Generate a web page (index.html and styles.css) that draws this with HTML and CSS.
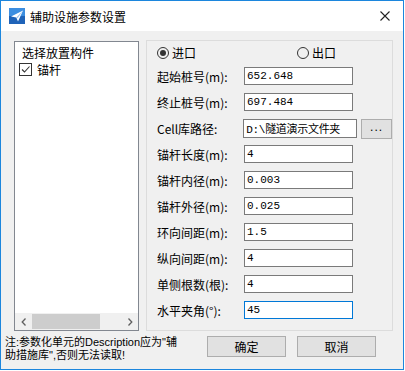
FILE: index.html
```html
<!DOCTYPE html>
<html lang="zh-CN">
<head>
    <meta charset="UTF-8">
    <title>辅助设施参数设置</title>
    <link rel="stylesheet" href="styles.css">
</head>
<body>
    <div class="dialog">
        <div class="titlebar">
            <svg class="app-icon" width="16" height="16" viewBox="0 0 16 16">
                <rect width="16" height="16" fill="#1f63b8"/>
                <rect width="16" height="8" fill="#3c8ee0"/>
                <path d="M2 8.5 L14 2.5 L9 13.5 L7.3 9.6 Z" fill="#ffffff"/>
                <path d="M7.3 9.6 L14 2.5 L8.6 10.2 Z" fill="#9cc3ee"/>
            </svg>
            <span class="title">辅助设施参数设置</span>
            <svg class="close" width="10" height="10" viewBox="0 0 10 10">
                <path d="M0.5 0.5 L9.5 9.5 M9.5 0.5 L0.5 9.5" stroke="#222" stroke-width="1.1"/>
            </svg>
        </div>

        <div class="client">
            <div class="main">
                <div class="list-box">
                    <div class="list-items">
                        <div class="list-head">选择放置构件</div>
                        <label class="list-item">
                            <span class="check">
                                <svg width="11" height="11" viewBox="0 0 11 11">
                                    <path d="M2 5.5 L4.5 8 L9.5 2.5" fill="none" stroke="#333" stroke-width="1.1"/>
                                </svg>
                            </span>
                            锚杆
                        </label>
                    </div>
                    <div class="hscroll">
                        <span class="arrow">
                            <svg width="6" height="8" viewBox="0 0 6 8"><path d="M4.5 0.5 L1.2 4 L4.5 7.5" fill="none" stroke="#606060" stroke-width="1.3"/></svg>
                        </span>
                        <div class="track"><div class="thumb"></div></div>
                        <span class="arrow">
                            <svg width="6" height="8" viewBox="0 0 6 8"><path d="M1.5 0.5 L4.8 4 L1.5 7.5" fill="none" stroke="#606060" stroke-width="1.3"/></svg>
                        </span>
                    </div>
                </div>

                <div class="group">
                    <div class="radio-row">
                        <label class="radio on"><span class="dot"></span>进口</label>
                        <label class="radio"><span class="dot"></span>出口</label>
                    </div>
                    <div class="fields">
                        <div class="field"><span class="label">起始桩号(m):</span><input class="box" value="652.648"></div>
                        <div class="field"><span class="label">终止桩号(m):</span><input class="box" value="697.484"></div>
                        <div class="field"><span class="label">Cell库路径:</span><input class="box wide" value="D:\隧道演示文件夹"><button class="browse">...</button></div>
                        <div class="field"><span class="label">锚杆长度(m):</span><input class="box" value="4"></div>
                        <div class="field"><span class="label">锚杆内径(m):</span><input class="box" value="0.003"></div>
                        <div class="field"><span class="label">锚杆外径(m):</span><input class="box" value="0.025"></div>
                        <div class="field"><span class="label">环向间距(m):</span><input class="box" value="1.5"></div>
                        <div class="field"><span class="label">纵向间距(m):</span><input class="box" value="4"></div>
                        <div class="field"><span class="label">单侧根数(根):</span><input class="box" value="4"></div>
                        <div class="field"><span class="label">水平夹角(°):</span><input class="box focus" value="45"></div>
                    </div>
                </div>
            </div>

            <div class="footer">
                <div class="note">
                    <div>注:参数化单元的Description应为"辅</div>
                    <div>助措施库",否则无法读取!</div>
                </div>
                <button class="btn">确定</button>
                <button class="btn">取消</button>
            </div>
        </div>
    </div>
</body>
</html>
```

FILE: styles.css
```css
body {
    margin: 0;
    padding: 0;
    background: #ffffff;
    font-family: "Noto Sans CJK SC", "Liberation Sans", sans-serif;
    font-size: 12px;
    color: #000;
}

.dialog {
    width: 402px;
    height: 368px;
    border: 1px solid #1c86dd;
    display: flex;
    flex-direction: column;
    background: #f0f0f0;
}

.titlebar {
    height: 30px;
    background: #ffffff;
    display: flex;
    align-items: center;
    padding: 0 13px 0 8px;
}

.app-icon {
    margin-right: 5px;
}

.title {
    flex: 1;
    font-size: 12px;
}

.client {
    flex: 1;
    display: flex;
    flex-direction: column;
}

.main {
    display: flex;
    gap: 7px;
    padding: 9px 0 0 13px;
}

.list-box {
    width: 123px;
    height: 288px;
    margin-top: 1px;
    border: 1px solid #828790;
    background: #ffffff;
    display: flex;
    flex-direction: column;
}

.list-items {
    flex: 1;
    padding: 2px 0 0 4px;
}

.list-head {
    padding-left: 3px;
    line-height: 17px;
}

.list-item {
    display: flex;
    align-items: center;
    gap: 5px;
    line-height: 17px;
}

.check {
    width: 11px;
    height: 11px;
    border: 1px solid #333;
    display: flex;
}

.hscroll {
    height: 17px;
    background: #f0f0f0;
    display: flex;
    align-items: center;
}

.arrow {
    width: 17px;
    display: flex;
    justify-content: center;
}

.track {
    flex: 1;
    height: 15px;
}

.thumb {
    width: 68px;
    height: 15px;
    background: #cdcdcd;
}

.group {
    width: 247px;
    height: 291px;
    box-sizing: border-box;
    border: 1px solid #dcdcdc;
    padding-left: 10px;
}

.radio-row {
    display: flex;
    height: 19px;
    margin-top: 2px;
    align-items: center;
}

.radio {
    display: flex;
    align-items: center;
    gap: 3px;
}

.radio.on {
    width: 140px;
    flex-shrink: 0;
}

.dot {
    width: 10px;
    height: 10px;
    border: 1px solid #333;
    border-radius: 50%;
    display: flex;
    align-items: center;
    justify-content: center;
}

.radio.on .dot::after {
    content: "";
    width: 6px;
    height: 6px;
    border-radius: 50%;
    background: #333;
}

.fields {
    display: flex;
    flex-direction: column;
    gap: 8px;
    margin-top: 5px;
}

.field {
    display: flex;
    align-items: center;
    height: 18px;
}

.label {
    width: 87px;
    white-space: nowrap;
}

.box {
    width: 109px;
    height: 18px;
    box-sizing: border-box;
    border: 1px solid #7a7a7a;
    background: #fff;
    font-family: "Liberation Mono", "Noto Sans CJK SC", monospace;
    font-size: 11px;
    padding: 0 2px;
    margin: 0;
    outline: none;
}

.box.wide {
    width: 114px;
    height: 19px;
    letter-spacing: -0.3px;
}

.box.focus {
    border-color: #0078d7;
}

.browse {
    width: 31px;
    height: 20px;
    margin: 2px 0 0 4px;
    background: #e1e1e1;
    border: 1px solid #adadad;
    padding: 0 0 4px;
    font-size: 12px;
    font-family: "Liberation Sans", sans-serif;
    letter-spacing: 1px;
}

.footer {
    display: flex;
    align-items: flex-start;
    padding: 2px 0 0 4px;
}

.note {
    width: 202px;
    font-family: "Liberation Sans", "Noto Sans CJK SC", sans-serif;
    font-size: 11px;
    line-height: 13px;
    white-space: nowrap;
    margin-top: 3px;
}

.btn {
    width: 79px;
    height: 21px;
    margin: 3px 11px 0 0;
    background: #e1e1e1;
    border: 1px solid #adadad;
    font-family: "Noto Sans CJK SC", sans-serif;
    font-size: 12px;
    padding: 0;
}
```
